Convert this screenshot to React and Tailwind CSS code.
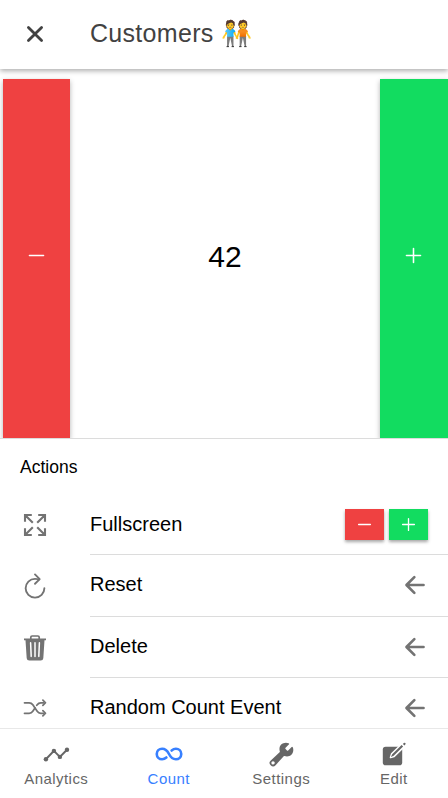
import React from 'react';
import {
  IoClose,
  IoRemoveOutline,
  IoAddOutline,
  IoRefreshOutline,
  IoShuffleOutline,
  IoArrowBack,
  IoInfinite,
  IoBuild,
} from 'react-icons/io5';

function ExpandIcon({ size }) {
  return (
    <svg width={size} height={size} viewBox="0 0 28 28" fill="none" stroke="currentColor" strokeWidth="2.1">
      <path d="M4 10.8V4h6.8M4 4l7.8 7.8M17.2 4H24v6.8M24 4l-7.8 7.8M4 17.2V24h6.8M4 24l7.8-7.8M24 17.2V24h-6.8M24 24l-7.8-7.8" />
    </svg>
  );
}

function TrashIcon({ size }) {
  return (
    <svg width={size} height={size} viewBox="0 0 30 30" fill="none">
      <path d="M10.8 6V4.3a1.3 1.3 0 0 1 1.3-1.3h5.8a1.3 1.3 0 0 1 1.3 1.3V6" stroke="currentColor" strokeWidth="1.7" />
      <path d="M4 5.4h22v1.8h-1.5l-1.2 18a2.6 2.6 0 0 1-2.6 2.4H9.3a2.6 2.6 0 0 1-2.6-2.4L5.500 7.200H4z" fill="currentColor" />
      <path d="M10.600 9.700l.6 13.700M15 9.700v13.700M19.400 9.700l-.6 13.700" stroke="white" strokeWidth="1.500" strokeLinecap="round" />
    </svg>
  );
}

function AnalyticsIcon({ size }) {
  return (
    <svg width={size} height={size} viewBox="0 0 28 28" fill="currentColor">
      <path d="M3.900 19.200l8-8.300 6 6 7.100-7.100" fill="none" stroke="currentColor" strokeWidth="2" />
      <circle cx="3.900" cy="19.200" r="2.200" />
      <circle cx="11.900" cy="10.900" r="2.200" />
      <circle cx="17.900" cy="16.900" r="2.200" />
      <circle cx="25" cy="9.800" r="2.200" />
    </svg>
  );
}

function EditIcon({ size }) {
  return (
    <svg width={size} height={size} viewBox="0 0 28 28" fill="none">
      <rect x="2.800" y="6.800" width="19.400" height="18.400" rx="2.800" fill="currentColor" />
      <path d="M10.600 17.400l1.100-3.500L22.600 3.500l2.300 2.300-10.800 10.600z" fill="white" stroke="white" strokeWidth="1.800" strokeLinejoin="round" />
      <path d="M10.900 17.100l1.300-2.900 9.400-9.100 1.500 1.500-9.400 9.200zM22.900 3.900l.9-.8a1.060 1.060 0 0 1 1.500 1.500l-.8.900z" fill="currentColor" />
    </svg>
  );
}

function Row({ icon: Icon, size, label, height, last, children }) {
  return (
    <div className={`flex ${height}`}>
      <div className="flex w-[70px] shrink-0 items-center justify-center text-[#737373]">
        <Icon size={size} />
      </div>
      <div className={`ml-5 flex flex-1 items-center justify-between pb-[2px] pr-[19px] ${last ? '' : 'border-b border-[#dcdcdc]'}`}>
        <span className="text-[20px] leading-6">{label}</span>
        {children}
      </div>
    </div>
  );
}

function BackArrow() {
  return <IoArrowBack size={28} className="text-[#737373]" />;
}

function Tab({ icon: Icon, size = 28, label, color }) {
  return (
    <div className={`flex flex-1 flex-col items-center pt-[11px] ${color}`}>
      <div className="flex h-7 items-center">
        <Icon size={size} />
      </div>
      <span className="mt-[1px] text-[15px] leading-5 tracking-[0.45px]">{label}</span>
    </div>
  );
}

export default function App() {
  return (
    <div className="flex h-[798px] w-[448px] flex-col overflow-hidden bg-white font-['Liberation_Sans',Arial,sans-serif] text-black">
      <header className="z-10 flex h-[69px] shrink-0 items-center bg-white pb-[2px] shadow-[0_2px_5px_rgba(0,0,0,0.32)]">
        <IoClose size={30} className="ml-5 text-[#424242]" />
        <h1 className="ml-10 pb-[2px] text-[25px] leading-8 tracking-[0.3px] text-[#424242]">Customers 🧑‍🤝‍🧑</h1>
      </header>

      <section className="flex h-[369px] shrink-0 overflow-hidden pt-[10px] pl-[3px]">
        <button className="flex w-[67px] shrink-0 items-center justify-center bg-[#ef4141] pb-[6px] text-white shadow-[0_2px_5px_rgba(0,0,0,0.3)]">
          <IoRemoveOutline size={25} />
        </button>
        <div className="flex flex-1 items-center justify-center pb-[4px] text-[30px]">42</div>
        <button className="flex w-[68px] shrink-0 items-center justify-center bg-[#12dc60] pr-[1px] pb-[6px] text-white shadow-[0_2px_5px_rgba(0,0,0,0.3)]">
          <IoAddOutline size={25} />
        </button>
      </section>

      <section className="h-[290px] shrink-0 overflow-hidden border-t border-[#dcdcdc]">
        <h2 className="flex h-[56px] items-center pl-5 text-[17.5px]">Actions</h2>
        <Row icon={ExpandIcon} size={28} label="Fullscreen" height="h-[60px]">
          <div className="mr-[1px] flex gap-[5px] pt-[1px] text-white">
            <button className="flex h-[31px] w-[39px] items-center justify-center bg-[#ef4141] shadow-[0_2px_3px_rgba(0,0,0,0.35)]">
              <IoRemoveOutline size={21} />
            </button>
            <button className="flex h-[31px] w-[39px] items-center justify-center bg-[#12dc60] shadow-[0_2px_3px_rgba(0,0,0,0.35)]">
              <IoAddOutline size={21} />
            </button>
          </div>
        </Row>
        <Row icon={IoRefreshOutline} size={30} label={<span className="block pb-[2px]">Reset</span>} height="h-[62px]"><BackArrow /></Row>
        <Row icon={TrashIcon} size={30} label="Delete" height="h-[61px]">
          <div className="pt-[2px]"><BackArrow /></div>
        </Row>
        <Row icon={IoShuffleOutline} size={28} label="Random Count Event" height="h-[60px]" last>
          <div className="pt-[1px]"><BackArrow /></div>
        </Row>
      </section>

      <nav className="flex h-[70px] w-[450px] shrink-0 border-t border-[#e8e8e8] bg-white">
        <Tab icon={AnalyticsIcon} label="Analytics" color="text-[#666666]" />
        <Tab icon={IoInfinite} label="Count" color="text-[#3880ff]" />
        <Tab icon={IoBuild} size={27} label="Settings" color="text-[#666666]" />
        <Tab icon={EditIcon} label="Edit" color="text-[#666666]" />
      </nav>
    </div>
  );
}
